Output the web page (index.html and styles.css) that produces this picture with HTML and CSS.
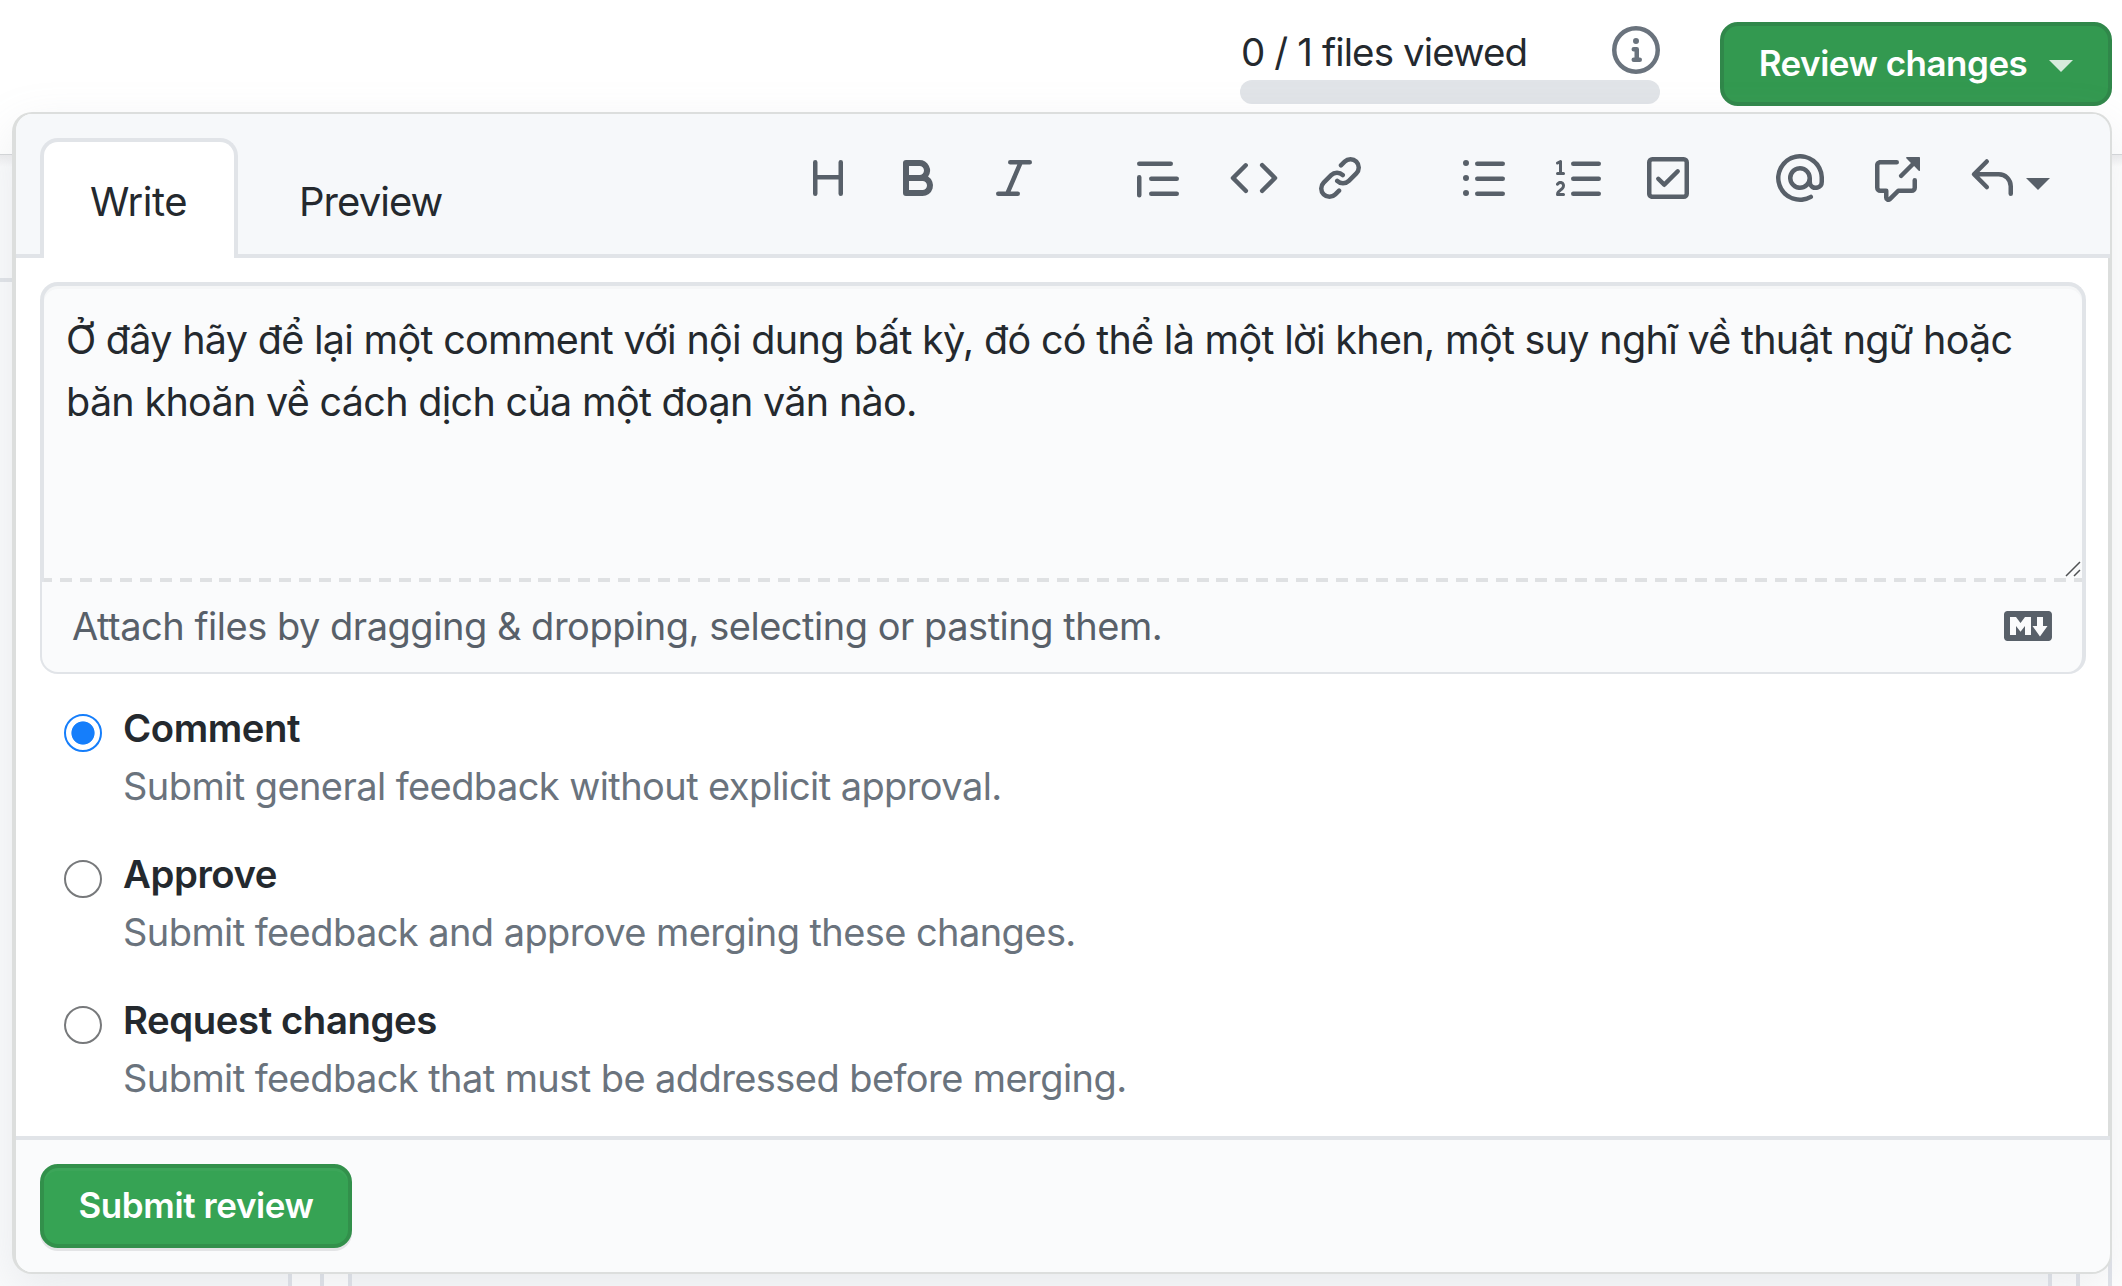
FILE: index.html
```
<!DOCTYPE html>
<html lang="vi">
<head>
<meta charset="utf-8">
<title>Review changes</title>
<link rel="stylesheet" href="styles.css">
</head>
<body>
<header class="topbar">
  <div class="viewed">
    <div class="viewed-row">
      <span class="viewed-text">0 / 1 files viewed</span>
      <svg class="icon info" viewBox="0 0 16 16"><path fill-rule="evenodd" d="M8 1.500a6.500 6.500 0 100 13 6.500 6.500 0 000-13zM0 8a8 8 0 1116 0A8 8 0 010 8zm6.500-.25A.75.75 0 017.250 7h1a.75.75 0 01.75.75v2.750h.25a.75.75 0 010 1.500h-2a.75.75 0 010-1.500h.25v-2h-.25a.75.75 0 01-.75-.75zM8 6a1 1 0 100-2 1 1 0 000 2z"/></svg>
    </div>
    <div class="progress"></div>
  </div>
  <button class="btn btn-open"><span class="label">Review changes</span><span class="caret"></span></button>
</header>
<div class="page">
  <div class="page-strip"></div>
  <div class="page-columns">
    <div class="col tree"></div><div class="col"></div><div class="col"></div><div class="col diff"></div><div class="col"></div><div class="col"></div>
  </div>
</div>

<section class="popover">
  <div class="pop-header">
    <nav class="tabs">
      <span class="tab active">Write</span>
      <span class="tab">Preview</span>
    </nav>
    <div class="toolbar">
      <div class="group">
        <svg class="icon" viewBox="0 0 16 16"><path d="M3.750 2a.75.75 0 01.75.75V7h7V2.750a.75.75 0 011.500 0v10.500a.75.75 0 01-1.500 0V8.500h-7v4.750a.75.75 0 01-1.500 0V2.750A.75.75 0 013.750 2z"/></svg>
        <svg class="icon bold" viewBox="0 0 16 16"><path fill-rule="evenodd" d="M4 2a1 1 0 00-1 1v10a1 1 0 001 1h5.500a3.500 3.500 0 001.852-6.470A3.500 3.500 0 008.500 2H4zm4.500 5a1.500 1.500 0 100-3H5v3h3.500zM5 9v3h4.500a1.500 1.500 0 000-3H5z"/></svg>
        <svg class="icon" viewBox="0 0 16 16"><path d="M6 2.750A.75.75 0 016.750 2h6.500a.75.75 0 010 1.500h-2.505l-3.858 9H9.250a.75.75 0 010 1.500h-6.500a.75.75 0 010-1.500h2.505l3.858-9H6.750A.75.75 0 016 2.750z"/></svg>
      </div>
      <div class="group">
        <svg class="icon" viewBox="0 0 16 16"><path d="M1.750 2.500a.75.75 0 000 1.500h10.500a.75.75 0 000-1.500H1.750zm4 5a.75.75 0 000 1.500h8.500a.75.75 0 000-1.500h-8.500zm0 5a.75.75 0 000 1.500h8.500a.75.75 0 000-1.500h-8.500zM2.500 7.750a.75.75 0 00-1.500 0v6a.75.75 0 001.500 0v-6z"/></svg>
        <svg class="icon" viewBox="0 0 16 16"><path d="M4.720 3.220a.75.75 0 011.060 1.060L2.060 8l3.720 3.720a.75.75 0 11-1.060 1.060L.47 8.530a.75.75 0 010-1.060l4.250-4.250zm6.560 0a.75.75 0 10-1.060 1.060L13.940 8l-3.720 3.720a.75.75 0 101.060 1.060l4.250-4.250a.75.75 0 000-1.060l-4.250-4.250z"/></svg>
        <svg class="icon link" viewBox="0 0 16 16"><path d="M7.775 3.275a.75.75 0 001.060 1.060l1.250-1.250a2 2 0 112.830 2.830l-2.500 2.500a2 2 0 01-2.830 0 .75.75 0 00-1.060 1.060 3.500 3.500 0 004.950 0l2.500-2.500a3.500 3.500 0 00-4.950-4.950l-1.250 1.250zm-4.690 9.640a2 2 0 010-2.830l2.500-2.500a2 2 0 012.830 0 .75.75 0 001.060-1.060 3.500 3.500 0 00-4.950 0l-2.500 2.500a3.500 3.500 0 004.950 4.950l1.250-1.250a.75.75 0 00-1.060-1.060l-1.250 1.250a2 2 0 01-2.830 0z"/></svg>
      </div>
      <div class="group">
        <svg class="icon" viewBox="0 0 16 16"><path d="M2 4a1 1 0 100-2 1 1 0 000 2zm3.750-1.500a.75.75 0 000 1.500h8.500a.75.75 0 000-1.500h-8.500zm0 5a.75.75 0 000 1.500h8.500a.75.75 0 000-1.500h-8.500zm0 5a.75.75 0 000 1.500h8.500a.75.75 0 000-1.500h-8.500zM3 8a1 1 0 11-2 0 1 1 0 012 0zm-1 6a1 1 0 100-2 1 1 0 000 2z"/></svg>
        <svg class="icon" viewBox="0 0 16 16"><path d="M2.003 2.500a.5.5 0 00-.723-.447l-1.003.5a.5.5 0 00.446.895l.28-.14V6H.5a.5.5 0 000 1h2.006a.5.5 0 100-1h-.503V2.500zM5 3.250a.75.75 0 01.75-.75h8.500a.75.75 0 010 1.500h-8.500A.75.75 0 015 3.250zm0 5a.75.75 0 01.75-.75h8.500a.75.75 0 010 1.500h-8.500A.75.75 0 015 8.250zm0 5a.75.75 0 01.75-.75h8.500a.75.75 0 010 1.500h-8.500a.75.75 0 01-.75-.75zM.924 10.320l.003-.004a.851.851 0 01.144-.153A.66.66 0 011.500 10c.195 0 .306.068.374.146a.57.57 0 01.128.376c0 .453-.269.682-.8 1.078l-.035.025C.692 11.980 0 12.495 0 13.500a.5.5 0 00.5.5h2.003a.5.5 0 000-1H1.146c.132-.197.351-.372.654-.597l.047-.035c.47-.35 1.156-.858 1.156-1.845 0-.365-.118-.744-.377-1.038-.268-.303-.658-.484-1.126-.484-.48 0-.84.202-1.068.392a1.858 1.858 0 00-.348.384l-.007.011-.002.004-.001.002-.001.001a.5.5 0 00.851.525z"/></svg>
        <svg class="icon task" viewBox="0 0 16 16"><path fill-rule="evenodd" d="M2.500 2.750a.25.25 0 01.25-.25h10.500a.25.25 0 01.25.25v10.500a.25.25 0 01-.25.25H2.750a.25.25 0 01-.25-.25V2.750zM2.750 1A1.750 1.750 0 001 2.750v10.500c0 .966.784 1.750 1.750 1.750h10.500A1.750 1.750 0 0015 13.250V2.750A1.750 1.750 0 0013.250 1H2.750zm9.030 5.280a.75.75 0 00-1.060-1.060L6.750 9.190 5.280 7.720a.75.75 0 00-1.060 1.060l2 2a.75.75 0 001.060 0l4.500-4.500z"/></svg>
      </div>
      <div class="group last">
        <svg class="icon" viewBox="0 0 16 16"><path fill-rule="evenodd" d="M4.750 2.370a6.500 6.500 0 006.500 11.260.75.75 0 01.75 1.298 8 8 0 113.994-7.273.754.754 0 01.006.095v1.500a2.750 2.750 0 01-5.072 1.475A4 4 0 1112 8v1.250a1.250 1.250 0 002.500 0V7.867a6.500 6.500 0 00-9.750-5.496V2.370zM10.500 8a2.500 2.500 0 10-5 0 2.500 2.500 0 005 0z"/></svg>
        <svg class="icon" viewBox="0 0 16 16"><path d="M16 1.250v4.146a.25.25 0 01-.427.177L14.030 4.030l-3.750 3.750a.75.75 0 11-1.060-1.060l3.750-3.750-1.543-1.543A.25.25 0 0111.604 1h4.146a.25.25 0 01.25.25zM2.750 3.500a.25.25 0 00-.25.25v7.500c0 .138.112.25.25.25h2a.75.75 0 01.75.75v2.190l2.720-2.720a.75.75 0 01.53-.22h4.500a.25.25 0 00.25-.25v-2.500a.75.75 0 111.500 0v2.500A1.750 1.750 0 0113.250 13H9.060l-2.573 2.573A1.457 1.457 0 014 14.543V13H2.750A1.750 1.750 0 011 11.250v-7.500C1 2.784 1.784 2 2.750 2h5.500a.75.75 0 010 1.500h-5.500z"/></svg>
        <span class="reply">
          <svg class="icon" viewBox="0 0 16 16"><path d="M6.780 1.970a.75.75 0 010 1.060L3.810 6h6.440A4.750 4.750 0 0115 10.750v2.500a.75.75 0 01-1.500 0v-2.500a3.250 3.250 0 00-3.250-3.250H3.810l2.970 2.970a.75.75 0 11-1.060 1.060L1.470 7.280a.75.75 0 010-1.060l4.250-4.250a.75.75 0 011.060 0z"/></svg>
          <span class="caret"></span>
        </span>
      </div>
    </div>
  </div>

  <div class="pop-body">
    <div class="composer">
      <div class="field">
        <textarea class="comment" spellcheck="false">Ở đây hãy để lại một comment với nội dung bất kỳ, đó có thể là một lời khen, một suy nghĩ về thuật ngữ hoặc băn khoăn về cách dịch của một đoạn văn nào.</textarea>
        <svg class="grip" viewBox="0 0 16 16"><path d="M1 15L15 1M9 15l6-6"/></svg>
      </div>
      <div class="dashes"></div>
      <div class="attach">
        <span>Attach files by dragging &amp; dropping, selecting or pasting them.</span>
        <svg class="icon" viewBox="0 0 16 16"><path fill-rule="evenodd" d="M14.850 3H1.150C.52 3 0 3.520 0 4.150v7.690C0 12.480.52 13 1.150 13h13.690c.64 0 1.150-.52 1.150-1.150v-7.700C16 3.520 15.480 3 14.850 3zM9 11H7V8L5.500 9.920 4 8v3H2V5h2l1.500 2L7 5h2v6zm2.990.5L9.500 8H11V5h2v3h1.500l-2.510 3.500z"/></svg>
      </div>
    </div>

    <div class="options">
      <label class="option">
        <span class="radio checked"></span>
        <span class="option-text"><strong>Comment</strong><span class="note">Submit general feedback without explicit approval.</span></span>
      </label>
      <label class="option">
        <span class="radio"></span>
        <span class="option-text"><strong>Approve</strong><span class="note">Submit feedback and approve merging these changes.</span></span>
      </label>
      <label class="option">
        <span class="radio"></span>
        <span class="option-text"><strong>Request changes</strong><span class="note">Submit feedback that must be addressed before merging.</span></span>
      </label>
    </div>
  </div>

  <div class="pop-footer">
    <button class="btn btn-submit">Submit review</button>
  </div>
</section>
</body>
</html>
```
FILE: styles.css
```
* { box-sizing: border-box; }

body {
  margin: 0;
  height: 1286px;
  overflow: hidden;
  display: flex;
  flex-direction: column;
  background: #fff;
  color: #24292e;
  font-family: Inter, "Noto Sans", sans-serif;
}

.icon { display: block; flex: none; width: 48px; height: 48px; fill: #586069; }

.caret {
  flex: none;
  width: 0;
  height: 0;
  border: 12px solid transparent;
  border-top-color: currentColor;
  border-bottom-width: 0;
}

/* top bar */
.topbar {
  display: flex;
  justify-content: flex-end;
  align-items: flex-start;
  gap: 60px;
  flex: none;
  height: 155px;
  padding: 22px 10px 0 0;
  border-bottom: 1px solid #d6d8da;
}
.viewed { width: 420px; padding-top: 2px; }
.viewed-row { display: flex; justify-content: space-between; align-items: center; height: 56px; }
.viewed-text { padding-left: 1px; font-size: 38.5px; line-height: 56px; letter-spacing: -0.9px; white-space: nowrap; }
.info { fill: #6a737d; margin-top: -4px; }
.progress { height: 24px; border-radius: 12px; background: #e1e4e8; }

.btn {
  display: flex;
  align-items: center;
  justify-content: center;
  height: 84px;
  padding: 0 0 2px;
  border: 4px solid #32904b;
  border-radius: 18px;
  background: #36a354;
  color: #fff;
  font: 600 35px Inter, "Noto Sans", sans-serif;
  letter-spacing: -0.4px;
  white-space: nowrap;
}
.btn-open { width: 392px; gap: 22px; background: #339950; border-color: #30874a; }
.btn-open .label { letter-spacing: -0.5px; }
.btn-open .caret { border-top-color: #d6ebdc; margin-top: 6px; }
.btn-submit { width: 312px; box-shadow: 0 3px 0 rgba(27, 31, 35, .1), inset 0 3px 0 rgba(255, 255, 255, .03); }

/* page that shows around the popover */
.page { flex: 1; display: flex; flex-direction: column; background: linear-gradient(#ededef, #fff 12px); }
.page-strip {
  flex: none;
  width: 292px;
  height: 127px;
  background: linear-gradient(#ededef, #fafbfc 12px);
  border-bottom: 4px solid #e1e4e8;
}
.page-columns { flex: 1; display: grid; grid-template-columns: 292px 32px 28px 1700px 28px 32px; }
.col { border-right: 4px solid #e1e4ea; }
.tree, .diff { background: #fafbfc; }

/* popover */
.popover {
  position: absolute;
  left: 12px;
  top: 112px;
  width: 2100px;
  height: 1162px;
  display: flex;
  flex-direction: column;
  border: solid #dcdedd;
  border-width: 2px 4px;
  border-radius: 20px;
  background: #fff;
  box-shadow: 0 16px 48px rgba(149, 157, 165, .17);
}
.pop-header {
  display: flex;
  align-items: flex-start;
  flex: none;
  height: 144px;
  margin-right: -2px;
  padding: 0 60px 0 24px;
  border-bottom: 4px solid #e1e4e8;
  border-radius: 16px 18px 0 0;
  background: #f6f8fa;
}
.tabs { display: flex; margin-top: 24px; }
.tab {
  height: 120px;
  padding: 34px 61px 0;
  font-size: 40px;
  line-height: 60px;
  letter-spacing: -0.95px;
}
.tab.active {
  width: 198px;
  padding: 30px 0 0 46px;
  border: 4px solid #e1e4e8;
  border-bottom: 0;
  border-radius: 18px 18px 0 0;
  background: #fff;
  letter-spacing: -0.5px;
}
.toolbar { display: flex; gap: 96px; margin: 40px 0 0 auto; }
.group { display: flex; gap: 48px; }
.bold { margin-left: -6px; }
.link { margin-left: -10px; }
.task { margin-left: -8px; }
.last { margin-left: -12px; }
.reply { display: flex; gap: 10px; color: #586069; }
.reply .caret { margin-top: 24px; }

.pop-body { flex: 1; padding: 24px 22px 0 24px; }
.composer { background: #fafbfc; border-radius: 18px; }
.field {
  position: relative;
  height: 296px;
  border: 4px solid #e1e4e8;
  border-bottom: 0;
  border-radius: 18px 18px 0 0;
  box-shadow: inset 0 3px 0 rgba(225, 228, 232, .2);
}
.comment {
  display: block;
  width: 100%;
  height: 292px;
  padding: 23px 22px 0;
  border: 0;
  outline: 0;
  resize: none;
  overflow: hidden;
  background: transparent;
  color: inherit;
  font: 39.5px/62px Inter, "Noto Sans", sans-serif;
  letter-spacing: -0.69px;
}
.grip {
  position: absolute;
  right: 1px;
  bottom: 1px;
  width: 16px;
  height: 16px;
  fill: none;
  stroke: #4f5254;
  stroke-width: 1.5;
}
.dashes {
  height: 4px;
  border: solid #e1e4e8;
  border-width: 0 4px;
  background: repeating-linear-gradient(90deg, #dfe1e3 0 12px, transparent 12px 19.94px) -4px 0 / 2060px 4px no-repeat;
}
.attach {
  display: flex;
  align-items: center;
  justify-content: space-between;
  height: 92px;
  padding: 0 30px 2px;
  border: solid #e1e4e8;
  border-width: 0 4px 2px 2px;
  border-radius: 0 0 18px 18px;
  color: #586069;
  font-size: 38px;
  letter-spacing: -0.48px;
}

.options { display: flex; flex-direction: column; gap: 30px; padding: 25px 24px 0; }
.option { display: flex; gap: 21px; }
.radio {
  flex: none;
  width: 38px;
  height: 38px;
  margin-top: 15px;
  border: 2px solid #77797b;
  border-radius: 50%;
}
.radio.checked { border-color: #157efb; background: radial-gradient(circle, #157efb 11.2px, transparent 12px); }
.option-text { display: flex; flex-direction: column; font-size: 38px; line-height: 58px; }
.option-text strong { font-size: 38.3px; font-weight: 600; letter-spacing: -0.42px; }
.note { color: #6a737d; letter-spacing: -0.58px; }

.pop-footer {
  flex: none;
  height: 136px;
  margin-right: -2px;
  padding: 24px;
  border-top: 4px solid #e1e4e8;
  border-radius: 0 0 18px 16px;
  background: #fafbfc;
}
```
